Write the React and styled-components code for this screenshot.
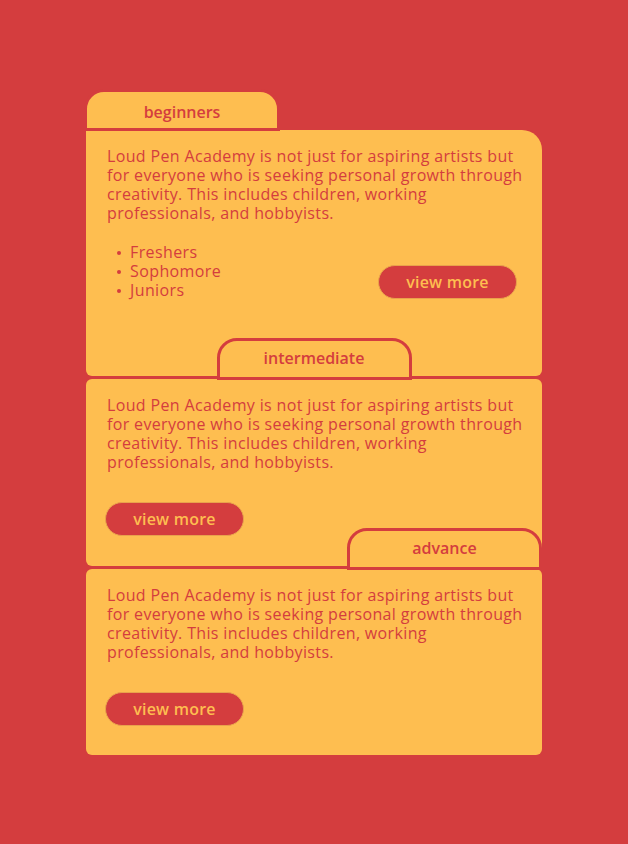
import React from 'react';
import styled, { createGlobalStyle } from 'styled-components';

const RED = '#d43d3e';
const YELLOW = '#febe50';

const GlobalStyle = createGlobalStyle`
	html, body {
		margin: 0;
		padding: 0;
		background: ${RED};
	}
	body {
		font-family: 'Open Sans', 'Liberation Sans', sans-serif;
		-webkit-font-smoothing: antialiased;
	}
`;

const Page = styled.main`
	min-height: 844px;
	padding: 89px 86px 0;
	box-sizing: border-box;
	display: flex;
	flex-direction: column;
	gap: 3px;
`;

const Section = styled.section`
	display: flex;
	flex-direction: column;
	margin-top: ${({ $overlap }) => ($overlap ? '-41px' : '0')};
`;

const TabRow = styled.div`
	display: flex;
	justify-content: ${({ $align }) => $align};
	margin-bottom: -1px;
	margin-left: ${({ $align }) => ($align === 'flex-start' ? '-2px' : '0')};
	position: relative;
	z-index: 1;
`;

const Tab = styled.div`
	width: ${({ $first }) => ($first ? '196px' : '195px')};
	height: 42px;
	box-sizing: border-box;
	border: 3px solid ${RED};
	border-radius: 20px 20px 0 0;
	background: ${YELLOW};
	display: flex;
	align-items: center;
	justify-content: center;
	color: ${RED};
	font-size: 16px;
	font-weight: 600;
	padding-top: ${({ $first }) => ($first ? '4px' : '0')};
	padding-bottom: ${({ $first }) => ($first ? '0' : '3px')};
`;

const Card = styled.div`
	background: ${YELLOW};
	border-radius: ${({ $first }) => ($first ? '0 20px 6px 6px' : '6px')};
	height: ${({ $height }) => $height}px;
	box-sizing: border-box;
	padding: 17px 16px 0 21px;
	display: flex;
	flex-direction: column;
	color: ${RED};
`;

const Text = styled.p`
	margin: 0;
	font-size: 16px;
	line-height: 19px;
	letter-spacing: 0.35px;
`;

const Bottom = styled.div`
	display: flex;
	align-items: ${({ $list }) => ($list ? 'flex-end' : 'flex-start')};
	justify-content: space-between;
	margin-top: ${({ $list }) => ($list ? '20px' : '30px')};
	padding-right: ${({ $list }) => ($list ? '9px' : '0')};
`;

const List = styled.ul`
	margin: 0;
	padding: 0 0 0 10px;
	list-style: none;
	font-size: 16px;
	line-height: 19px;
	letter-spacing: 0.4px;
	li {
		display: flex;
		align-items: center;
		gap: 9px;
	}
	li::before {
		content: '';
		width: 4px;
		height: 4px;
		border-radius: 50%;
		background: ${RED};
		margin-top: 1px;
	}
`;

const Button = styled.button`
	width: 139px;
	height: 34px;
	border: 1px solid #e9a24c;
	border-radius: 17px;
	background: ${RED};
	color: ${YELLOW};
	font-family: inherit;
	font-size: 16px;
	font-weight: 600;
	letter-spacing: 0.2px;
	cursor: pointer;
	margin-left: ${({ $left }) => ($left ? '-2px' : '0')};
	margin-bottom: ${({ $left }) => ($left ? '0' : '1px')};
`;

const blurb =
	'Loud Pen Academy is not just for aspiring artists but for everyone who is seeking personal growth through creativity. This includes children, working professionals, and hobbyists.';

const levels = [
	{ name: 'beginners', align: 'flex-start', height: 246, list: ['Freshers', 'Sophomore', 'Juniors'] },
	{ name: 'intermediate', align: 'center', height: 187 },
	{ name: 'advance', align: 'flex-end', height: 186 },
];

export default function App() {
	return (
		<>
			<GlobalStyle />
			<Page>
				{levels.map((level, i) => (
					<Section key={level.name} $overlap={i > 0}>
						<TabRow $align={level.align}>
							<Tab $first={i === 0}>{level.name}</Tab>
						</TabRow>
						<Card $first={i === 0} $height={level.height}>
							<Text>{blurb}</Text>
							{level.list ? (
								<Bottom $list>
									<List>
										{level.list.map((item) => (
											<li key={item}>{item}</li>
										))}
									</List>
									<Button>view more</Button>
								</Bottom>
							) : (
								<Bottom>
									<Button $left>view more</Button>
								</Bottom>
							)}
						</Card>
					</Section>
				))}
			</Page>
		</>
	);
}
